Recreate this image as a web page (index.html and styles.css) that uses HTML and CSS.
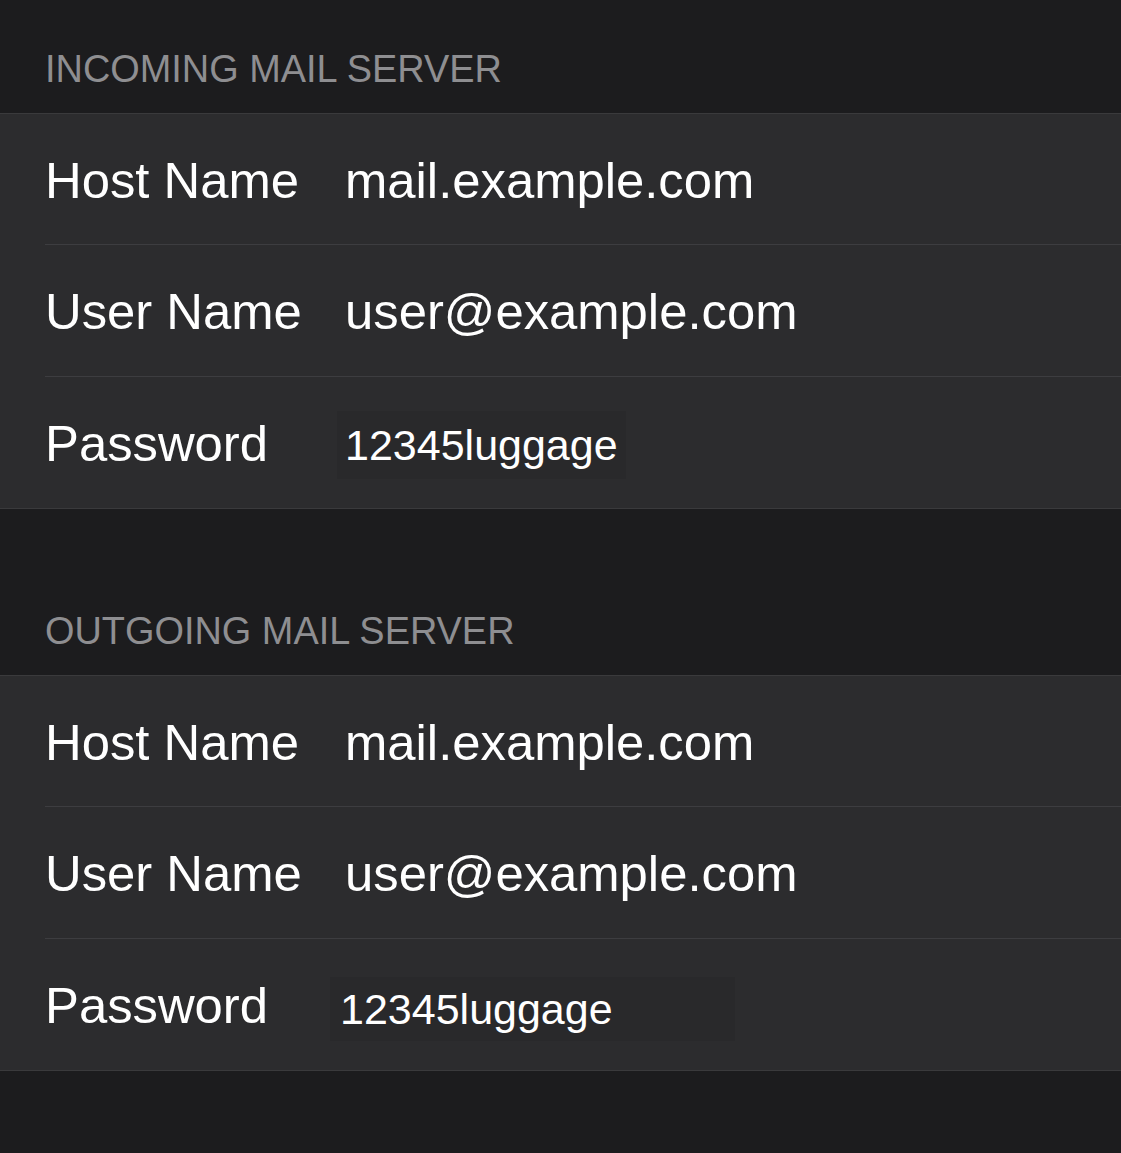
FILE: index.html
```html
<!DOCTYPE html>
<html lang="en">
<head>
  <meta charset="UTF-8">
  <meta name="viewport" content="width=device-width, initial-scale=1.0">
  <title>Mail Account</title>
  <link rel="stylesheet" href="styles.css">
</head>
<body>
  <div class="section first">
    <div class="section-title">INCOMING MAIL SERVER</div>
    <div class="group">
      <div class="row">
        <span class="label">Host Name</span>
        <span class="value">mail.example.com</span>
      </div>
      <div class="row">
        <span class="label">User Name</span>
        <span class="value">user@example.com</span>
      </div>
      <div class="row">
        <span class="label">Password</span>
        <span class="pass pass-in">12345luggage</span>
      </div>
    </div>
  </div>

  <div class="section">
    <div class="section-title">OUTGOING MAIL SERVER</div>
    <div class="group">
      <div class="row">
        <span class="label">Host Name</span>
        <span class="value">mail.example.com</span>
      </div>
      <div class="row">
        <span class="label">User Name</span>
        <span class="value">user@example.com</span>
      </div>
      <div class="row">
        <span class="label">Password</span>
        <span class="pass pass-out">12345luggage</span>
      </div>
    </div>
  </div>
</body>
</html>
```

FILE: styles.css
```css
html, body { margin: 0; padding: 0; }
body { background: #1c1c1e; font-family: "Liberation Sans", Arial, sans-serif; color: #fff; height: 1153px; overflow: hidden; }

.section { padding-top: 53px; }
.section.first { padding-top: 0; }
.section-title { height: 113px; box-sizing: border-box; padding: 0 0 24px 45px; display: flex; align-items: flex-end; font-size: 37.9px; color: #8e8e91; line-height: 1; }

.group { background: #2c2c2e; border-top: 1px solid #3a3a3c; border-bottom: 1px solid #3a3a3c; padding-left: 45px; }
.row { height: 130px; display: flex; align-items: center; padding-top: 4px; box-sizing: border-box; }
.row + .row { border-top: 1px solid #3d3d40; height: 132px; }
.label { width: 300px; flex: none; font-size: 50.8px; line-height: 1; }
.value { font-size: 50.8px; line-height: 1; }

.pass { font-size: 43px; line-height: 68px; height: 68px; background: #29292b; box-sizing: border-box; }
.pass-in { margin-left: -8px; padding: 0 8px; width: 289px; }
.pass-out { margin-left: -15px; padding: 0 10px; width: 405px; height: 64px; line-height: 64px; margin-top: 4px; }
```
